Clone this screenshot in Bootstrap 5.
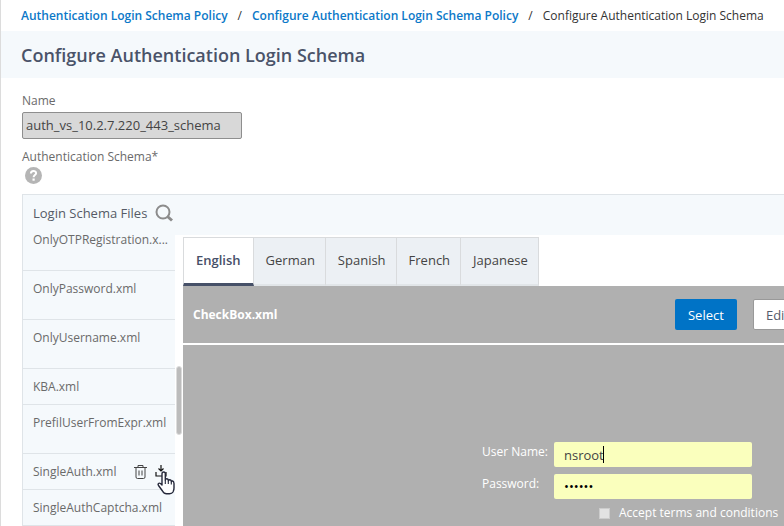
<!DOCTYPE html>
<html lang="en">
<head>
<meta charset="utf-8">
<meta name="viewport" content="width=device-width, initial-scale=1">
<title>Configure Authentication Login Schema</title>
<link href="https://cdn.jsdelivr.net/npm/bootstrap@5.3.0/dist/css/bootstrap.min.css" rel="stylesheet">
<style>
body{font-family:"Open Sans","Noto Sans",sans-serif;font-size:12px;line-height:18px;color:#6a6a6a;background:#fff}
.page{border-left:1px solid #dcdcdc}
.crumbs{--bs-breadcrumb-divider:none;line-height:19px;padding:6px 0 6px 20px;flex-wrap:nowrap;white-space:nowrap}
.crumbs a{color:#0b78c8;font-weight:600;text-decoration:none}
.crumbs .breadcrumb-item{color:#333}
.crumbs .breadcrumb-item+.breadcrumb-item{padding-left:10px}
.crumbs .breadcrumb-item+.breadcrumb-item::before{content:"/";color:#333;padding-right:10px}
.titlebar{background:#f5f9fc;padding:12px 20px 11px}
.titlebar h1{font-size:18px;line-height:24px;font-weight:600;color:#4a5369}
.fields{padding:14px 0 0 21px}
.name-box{width:220px;height:27px;margin-top:2px;padding:0 3px 2px;font-size:13px;color:#444;background:#d8d8d8;border:1px solid #8e8e8e;border-radius:2px}
.schema-title{margin-top:9px}
.help{width:17px;height:17px;margin:1px 0 10px 3px;border:0;padding:0;background:none}
.panel{border:1px solid #dfe4e8;border-right:0;border-bottom:0;background:#f5f9fc}
.files{width:152px}
.files-head{padding:8px 1px 0 10px;height:27px;line-height:20px;font-size:13px;color:#555b66}
.files-list li{padding:9px 8px 8px 10px;border-bottom:1px solid #dfe4e8;white-space:nowrap}
.files-list li.tall{padding-bottom:21px}
.tool{border:0;background:none;padding:0;line-height:0}
.pointer{left:134px;top:17px}
.gutter{width:8px;background:#fff;padding:131px 1px 0;margin-top:40px}
.thumb{height:69px;background:#bcbcbc;border:1px solid #dcdcdc;border-radius:4px}
.strip{height:40px}
.lang{background:#fff;padding-top:2px}
.lang .nav-link{border:1px solid #d9dbdd;border-left:0;border-bottom:2px solid #e1e5e8;border-radius:0;background:#ecf0f4;color:#444;font-size:13px;line-height:20px;padding:12px 10px 14px 12px}
.lang .nav-link.active{border-left:1px solid #d9dbdd;border-bottom:3px solid #465068;padding:12px 12px 13px;background:#fff;color:#465068;font-weight:600}
.preview{min-width:640px;background:#b0b0b0;color:#fff}
.preview-head{padding:12px 21px 13px 10px;border-bottom:2px solid #fff;border-top:1px solid #b0b0b0}
.act{height:31px;padding:0 12px;font-size:13px;line-height:20px;border-radius:2px}
.act-main{background:#0073c6;color:#fff;width:62px}
.act-alt{background:#fff;color:#555b6b;border:1px solid #999}
.login{width:270px;margin:97px 71px 0 auto}
.login .field-label{flex:0 0 72px;padding-top:1px}
.login .entry{height:25px;min-width:0;padding:0 10px;border:0;border-radius:2px;background:#faffbd;color:#444;font-size:13px}
.login .entry[type=password]{color:#000;padding-bottom:2px}
.login .entry-row{margin-bottom:7px}
.caret{left:49px;top:4px;width:1px;height:17px;background:#000}
.terms{gap:9px;margin:5px 0 0 117px;white-space:nowrap}
.tick{appearance:none;width:11px;height:11px;border:1px solid #ccc;background:#e2e2e2;margin:0}
</style>
<script src="https://cdn.jsdelivr.net/npm/bootstrap@5.3.0/dist/js/bootstrap.bundle.min.js"></script>
</head>
<body>
<div class="page vh-100 overflow-hidden d-flex flex-column">
  <nav aria-label="breadcrumb">
    <ol class="breadcrumb crumbs mb-0">
      <li class="breadcrumb-item"><a href="#">Authentication Login Schema Policy</a></li>
      <li class="breadcrumb-item"><a href="#">Configure Authentication Login Schema Policy</a></li>
      <li class="breadcrumb-item" aria-current="page">Configure Authentication Login Schema</li>
    </ol>
  </nav>
  <header class="titlebar"><h1 class="m-0">Configure Authentication Login Schema</h1></header>
  <main class="fields d-flex flex-column flex-grow-1">
    <label for="name">Name</label>
    <input id="name" class="name-box" type="text" value="auth_vs_10.2.7.220_443_schema" readonly>
    <div class="schema-title">Authentication Schema*</div>
    <button class="help d-flex" type="button" aria-label="Help">
      <svg width="17" height="17" viewBox="0 0 17 17"><circle cx="8.500" cy="8.500" r="8.500" fill="#b5b5b5"/><path d="M5.900 6.600c0-3.600 5.200-3.400 5.200-.4 0 1.900-2.500 1.900-2.500 4" fill="none" stroke="#fff" stroke-width="2"/><rect x="7.500" y="11.500" width="2.200" height="2.200" fill="#fff"/></svg>
    </button>
    <section class="panel d-flex flex-grow-1">
      <div class="files flex-shrink-0">
        <div class="files-head d-flex justify-content-between">
          <span class="text-nowrap">Login Schema Files</span>
          <button class="tool" type="button" aria-label="Search"><svg width="20" height="20" viewBox="0 0 20 20" fill="none" stroke="#8c8c8c" stroke-width="2"><circle cx="9" cy="9" r="6.500"/><path d="M13.500 13.500l4.500 4" stroke-width="3"/></svg></button>
        </div>
        <ul class="files-list list-unstyled mb-0">
          <li class="tall">OnlyOTPRegistration.x...</li>
          <li class="tall">OnlyPassword.xml</li>
          <li class="tall">OnlyUsername.xml</li>
          <li>KBA.xml</li>
          <li class="tall">PrefilUserFromExpr.xml</li>
          <li class="d-flex position-relative">
            <span class="me-auto">SingleAuth.xml</span>
            <button class="tool me-2" type="button" aria-label="Delete"><svg width="13" height="14" viewBox="0 0 13 14" fill="none" stroke="#444"><path d="M0 2.500h13M4 2.500v-2h5v2M2 3v9q0 1.500 1.500 1.500h6q1.500 0 1.500-1.500V3M5 5.500v5M8 5.500v5"/></svg></button>
            <button class="tool" type="button" aria-label="Download"><svg width="12" height="14" viewBox="0 0 12 14" fill="none" stroke="#111" stroke-width="1.200"><path d="M6 0v6M3.500 3.500l2.500 2.500 2.500-2.500M1 7v4h10V7"/></svg></button>
            <svg class="pointer position-absolute" width="18" height="24" viewBox="0 0 18 24"><path d="M5 14V3q0-2 1.700-2T8.300 3v6q0-1.200 1.400-1.200t1.600 1.300v.6q.3-1 1.500-1t1.500 1.300v.7q.3-.9 1.400-.7T17 12.500V17q0 2-1 4-1 1.800-3.500 1.800H9.500Q7 22.800 5.500 20L1.500 14.500q-.8-1.300 0-2t2 0z" fill="#fff" stroke="#25283a" stroke-width="1.400" stroke-linejoin="round"/><path d="M8.300 9v4M11.300 10v3M14.300 11v2.500" stroke="#25283a" stroke-width="1.100"/></svg>
          </li>
          <li>SingleAuthCaptcha.xml</li>
        </ul>
      </div>
      <div class="gutter flex-shrink-0"><div class="thumb"></div></div>
      <div class="flex-grow-1 overflow-hidden d-flex flex-column">
        <div class="strip flex-shrink-0"></div>
        <div class="lang nav" role="tablist">
          <button class="nav-link active" type="button" role="tab">English</button>
          <button class="nav-link" type="button" role="tab">German</button>
          <button class="nav-link" type="button" role="tab">Spanish</button>
          <button class="nav-link" type="button" role="tab">French</button>
          <button class="nav-link" type="button" role="tab">Japanese</button>
        </div>
        <div class="preview flex-grow-1">
          <div class="preview-head d-flex align-items-center">
            <strong class="me-auto">CheckBox.xml</strong>
            <button class="btn act act-main me-3" type="button">Select</button>
            <button class="btn act act-alt" type="button">Edit</button>
          </div>
          <form class="login">
            <div class="entry-row d-flex"><label class="field-label" for="user">User Name:</label>
              <div class="position-relative flex-grow-1 d-flex"><input id="user" class="entry w-100" type="text" value="nsroot"><span class="caret position-absolute"></span></div></div>
            <div class="d-flex"><label class="field-label" for="pass">Password:</label>
              <input id="pass" class="entry flex-grow-1" type="password" value="secret"></div>
            <div class="terms d-flex align-items-center"><input id="terms" class="tick flex-shrink-0" type="checkbox"><label for="terms">Accept terms and conditions</label></div>
          </form>
        </div>
      </div>
    </section>
  </main>
</div>
</body>
</html>
